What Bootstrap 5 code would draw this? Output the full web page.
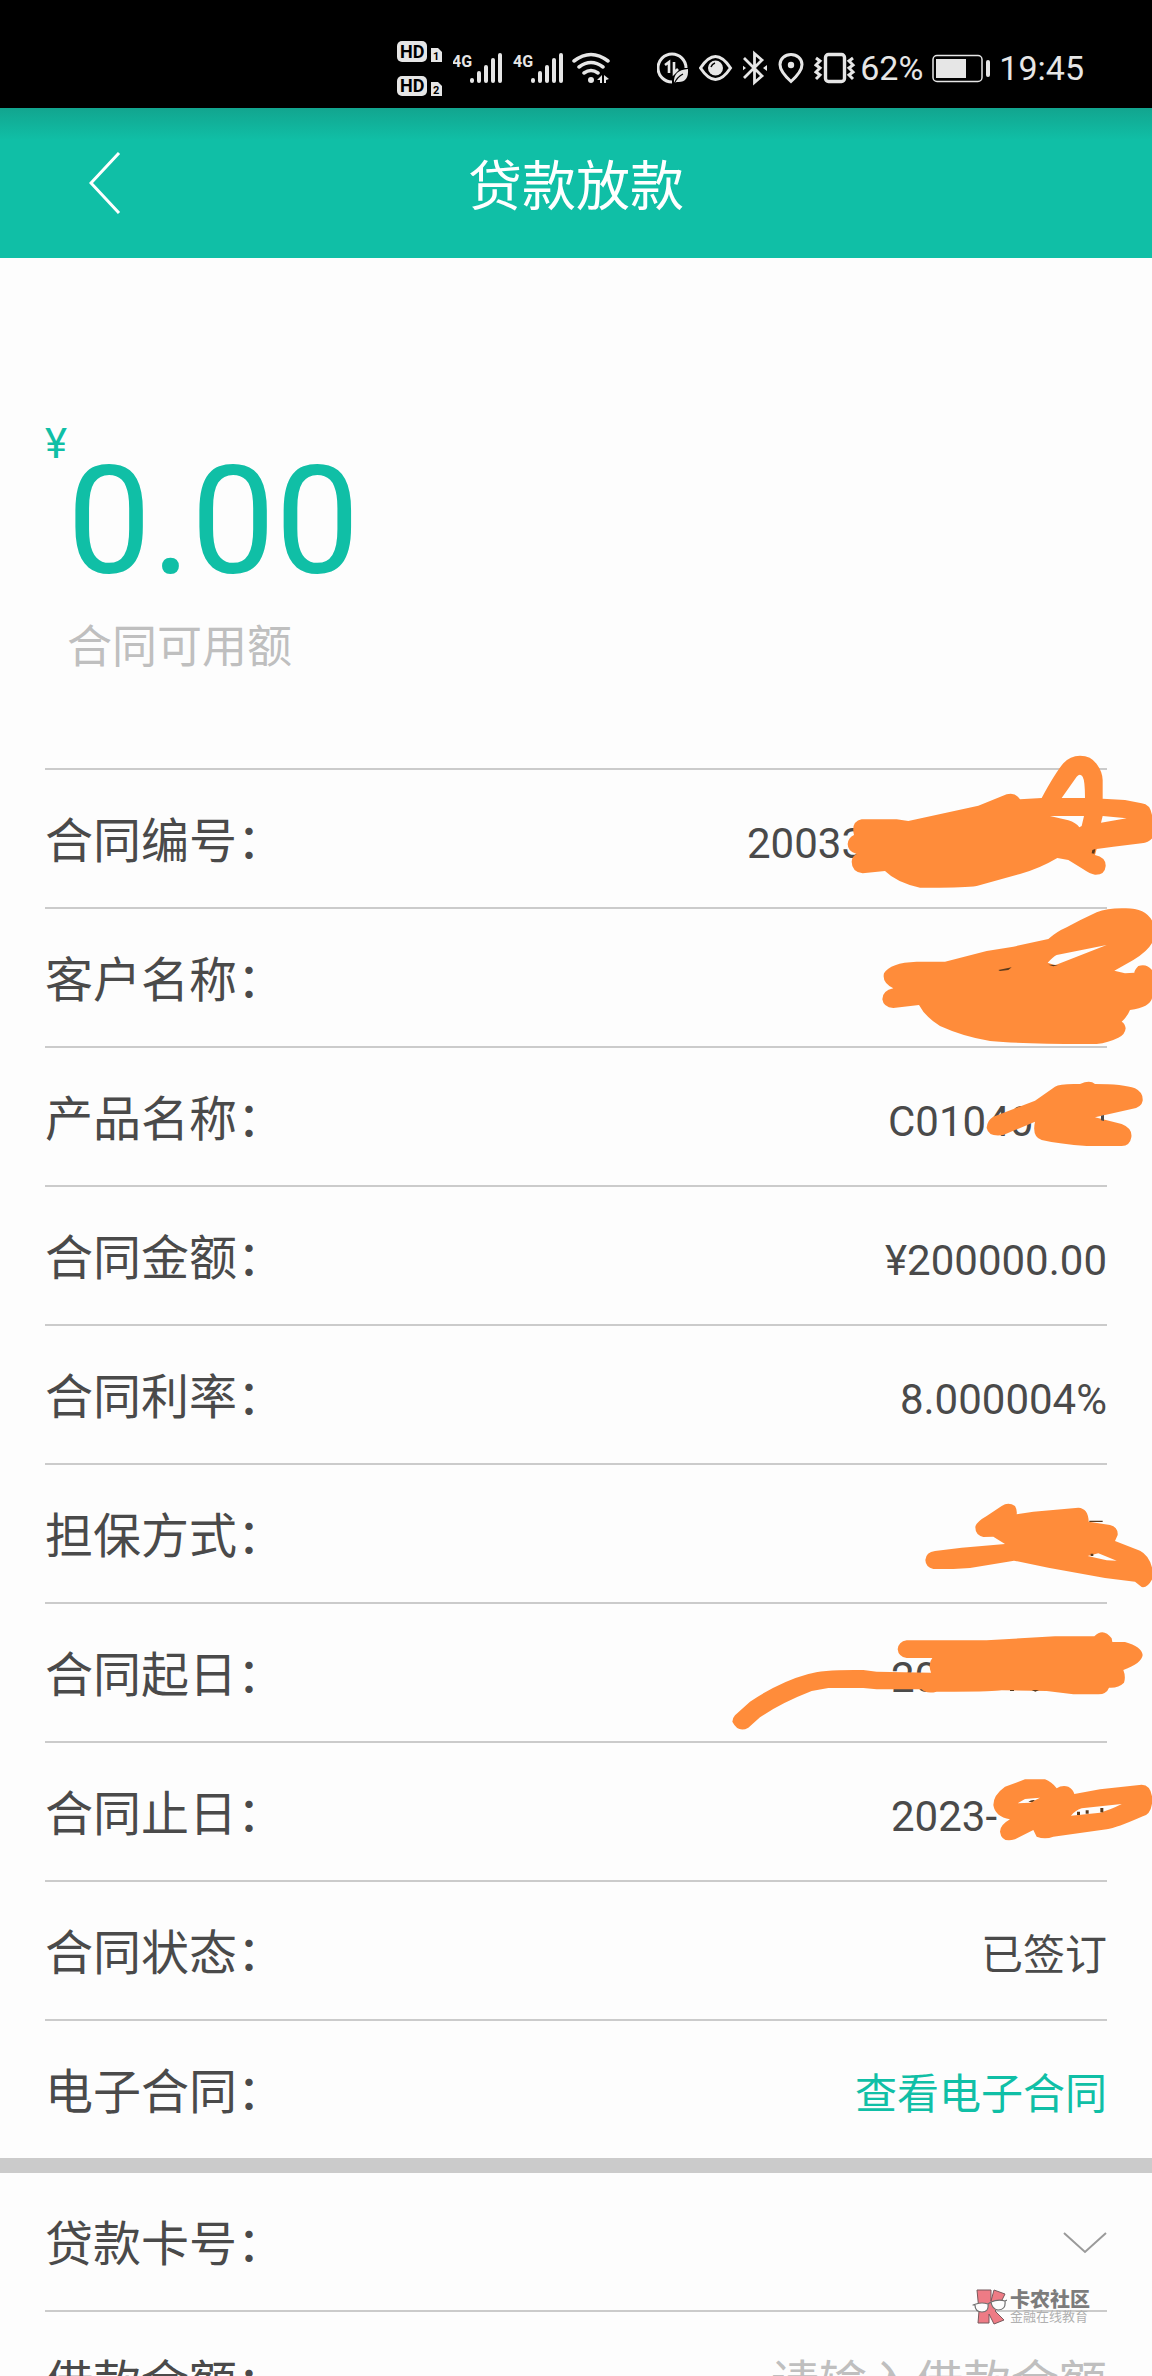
<!DOCTYPE html>
<html lang="zh-CN">
<head>
<meta charset="utf-8">
<meta name="viewport" content="width=device-width, initial-scale=1">
<title>贷款放款</title>
<link href="https://cdn.jsdelivr.net/npm/bootstrap@5.3.0/dist/css/bootstrap.min.css" rel="stylesheet">
<style>
  :root { --teal: #10bfa6; --ink: #4a4a4a; --rule: #cbcbcb; --soft: #bfbfbf; --scribble: #ff8c3a; }
  body { font-family: Roboto, "Noto Sans CJK SC", sans-serif; color: var(--ink); background: #fdfdfd; }
  .status { height: 108px; padding: 27px 68px 0 0; background: #000; color: #e6e6e6; font-size: 34px; line-height: 40px; }
  .status svg { height: 62px; flex: none; }
  .status .icons { gap: 10px; }
  .status .net { margin-right: 47px; }
  .titlebar { height: 150px; background: linear-gradient(#12a58f, var(--teal) 32px); color: #fff; }
  .titlebar h1 { font: 400 54px/80px "Noto Sans CJK SC", sans-serif; }
  .back-btn { left: 77px; padding: 0 12px; border: 0; background: none; }
  .balance { padding: 161px 45px 93px; color: var(--teal); }
  .unit { font-size: 42px; line-height: 49px; }
  .sum { font-size: 150px; line-height: 150px; margin-top: 28px; }
  .caption-text { margin: 24px 0 0 22px; font-size: 45px; line-height: 54px; color: var(--soft); }
  .lines { padding: 0 45px; }
  .line-item { padding: 31px 0 33px; border-top: 2px solid var(--rule); }
  .lines.plain .line-item:first-child { border-top: 0; }
  .line-item dt, .line-item label { font: 400 48px/73px "Noto Sans CJK SC", sans-serif; white-space: nowrap; }
  .line-item dd { margin: 0; font-size: 42px; line-height: 48px; }
  .line-item a { color: var(--teal); text-decoration: none; }
  .hid-l { width: 360px; }
  .hid-m { width: 219px; }
  .hid-s { width: 216px; }
  .scribbles { top: -28px; right: 0; width: 432px; height: 1120px; }
  .divider { height: 15px; background: var(--rule); }
  .pick { appearance: none; border: 0; background: none; height: 48px; }
  .amount { border: 0; background: none; text-align: right; padding: 0; min-width: 0; font: 400 48px/73px "Noto Sans CJK SC", sans-serif; }
  .amount::placeholder { color: var(--soft); opacity: 1; }
  .stamp { right: 17px; bottom: -15px; gap: 3px; color: #7c7c7c; font-family: "Noto Sans CJK SC", sans-serif; }
  .stamp b { font-size: 20px; line-height: 20px; font-weight: 900; }
  .stamp i { font-size: 13px; line-height: 13px; font-style: normal; color: #b0b0b0; }
</style>
<script src="https://cdn.jsdelivr.net/npm/bootstrap@5.3.0/dist/js/bootstrap.bundle.min.js"></script>
</head>
<body class="vh-100 overflow-hidden">

<div class="status d-flex align-items-center justify-content-end">
  <div class="icons net d-flex">
    <svg width="46" viewBox="400 36 46 62" fill="#e6e6e6" font-family="Roboto" font-weight="700">
      <rect x="400" y="40" width="30" height="21" rx="5"/><rect x="400" y="75" width="30" height="20" rx="5"/>
      <path d="M434 47h7l4 4v10h-11zM434 81h7l4 4v10h-11z"/>
      <g fill="#000"><text x="403" y="57" font-size="18">HD</text><text x="403" y="91" font-size="18">HD</text>
      <text x="436" y="59" font-size="11">1</text><text x="436" y="93" font-size="11">2</text></g>
    </svg>
    <svg width="51" viewBox="456 36 51 62" fill="#e6e6e6">
      <text x="455" y="66" font-size="16" font-family="Roboto" font-weight="700" fill="#e6e6e6">4G</text>
      <path d="M475 79v1M482 72v8M489 66v14M496 59v21M503 54v26" stroke="#e6e6e6" stroke-width="4" stroke-linecap="round"/>
    </svg>
    <svg width="48" viewBox="517 36 48 62" overflow="visible" fill="#e6e6e6">
      <text x="516" y="66" font-size="16" font-family="Roboto" font-weight="700">4G</text>
      <path d="M536 79v1M543 72v8M550 66v14M557 59v21M564 54v26" stroke="#e6e6e6" stroke-width="4" stroke-linecap="round"/>
    </svg>
    <svg width="38" viewBox="575 36 38 62" fill="none" stroke="#e6e6e6" stroke-width="3.5" stroke-linecap="round">
      <path d="M577 60q17-13 34 0M582 66q12-9 24 0M587 72q7-5 14 0"/>
      <circle cx="594" cy="79" r="3" fill="#e6e6e6" stroke="none"/>
      <path d="M605 74v8h-2v-3h-3zM607 74l5 4-3 1v3h-2z" fill="#e6e6e6" stroke="none"/>
    </svg>
  </div>
  <div class="icons d-flex">
    <svg width="32" viewBox="660 36 32 62" fill="none" stroke="#e6e6e6" stroke-width="3">
      <path d="M675 81a14 14 0 1 1 14-14"/><path d="M668 64l4-3v11M677 61v11l4-4" stroke-width="2.6"/>
      <path d="M677 82q-1-13 14-14q1 14-11 13z" fill="#e6e6e6" stroke="none"/><path d="M677 83q3-7 9-10" stroke="#000" stroke-width="1.2"/>
    </svg>
    <svg width="34" viewBox="702 36 34 62" fill="none" stroke="#e6e6e6" stroke-width="3">
      <path d="M703.500 67q15-23 30 0q-15 23-30 0z"/><circle cx="718.500" cy="67" r="7.500" fill="#e6e6e6" stroke="none"/><path d="M714 66q1-3 4-4" stroke="#000" stroke-width="1.500"/>
    </svg>
    <svg width="25" viewBox="746 36 25 62" fill="none" stroke="#e6e6e6" stroke-width="2.800">
      <path d="M747 57l18 18-7.500 6.500v-29l7.500 6.500-18 18"/><path d="M745 64l4 3-4 3zM770 64l-4 3 4 3z" fill="#e6e6e6" stroke="none"/>
    </svg>
    <svg width="26" viewBox="779 36 26 62" fill="none" stroke="#e6e6e6" stroke-width="3">
      <path d="M792 80.500q-11-10-11-17a11 10 0 0 1 22 0q0 7-11 17z"/><circle cx="792" cy="64" r="3.200" fill="#e6e6e6" stroke="none"/>
    </svg>
    <svg width="42" viewBox="815 36 42 62" fill="none" stroke="#e6e6e6" stroke-width="3.400">
      <rect x="826.500" y="53.500" width="19" height="27" rx="3"/><path d="M817 57l4 3-4 4 4 3-4 4 4 3-4 4M854 57l-4 3 4 4-4 3 4 4-4 3 4 4" stroke-width="3"/>
    </svg>
  </div>
  <span class="ms-1">62%</span>
  <svg class="mx-2" width="60" viewBox="932 36 60 62" fill="none" stroke="#e6e6e6">
    <rect x="934" y="54.500" width="49" height="26" rx="4" stroke-width="1.500"/><path d="M937 58h30v19h-30z" fill="#e6e6e6" stroke="none"/><path d="M989 61v13" stroke-width="4" stroke-linecap="round"/>
  </svg>
  <span>19:45</span>
</div>

<header class="titlebar position-relative d-flex align-items-center justify-content-center">
  <button class="back-btn position-absolute" type="button" aria-label="返回">
    <svg class="d-block" width="32" height="62" viewBox="0 0 32 62" fill="none" stroke="#fff" stroke-width="3"><path d="M30 1L2 31l28 30"/></svg>
  </button>
  <h1 class="m-0">贷款放款</h1>
</header>

<main>
  <section class="balance">
    <div class="d-flex align-items-start"><span class="unit">¥</span><span class="sum">0.00</span></div>
    <p class="caption-text">合同可用额</p>
  </section>

  <div class="position-relative">
    <dl class="lines m-0">
      <div class="line-item d-flex justify-content-between align-items-baseline"><dt>合同编号：</dt><dd class="hid-l">200333</dd></div>
      <div class="line-item d-flex justify-content-between align-items-baseline"><dt>客户名称：</dt><dd></dd></div>
      <div class="line-item d-flex justify-content-between align-items-baseline"><dt>产品名称：</dt><dd class="hid-m">C01040</dd></div>
      <div class="line-item d-flex justify-content-between align-items-baseline"><dt>合同金额：</dt><dd>¥200000.00</dd></div>
      <div class="line-item d-flex justify-content-between align-items-baseline"><dt>合同利率：</dt><dd>8.000004%</dd></div>
      <div class="line-item d-flex justify-content-between align-items-baseline"><dt>担保方式：</dt><dd></dd></div>
      <div class="line-item d-flex justify-content-between align-items-baseline"><dt>合同起日：</dt><dd class="hid-s">20</dd></div>
      <div class="line-item d-flex justify-content-between align-items-baseline"><dt>合同止日：</dt><dd class="hid-s">2023-</dd></div>
      <div class="line-item d-flex justify-content-between align-items-baseline"><dt>合同状态：</dt><dd>已签订</dd></div>
      <div class="line-item d-flex justify-content-between align-items-baseline"><dt>电子合同：</dt><dd><a href="#contract">查看电子合同</a></dd></div>
    </dl>
    <!-- marker strokes that hide the private values -->
    <svg class="scribbles position-absolute pe-none" viewBox="0 0 1296 3360" fill="#ff8c3a" fill-rule="evenodd" aria-hidden="true">
      <path d="M425 238L530 238L565 243L775 197L860 163Q885 155 900 178L965 174Q1005 100 1030 70Q1050 47 1080 47Q1115 47 1132 75Q1147 95 1148 120L1148 176L1215 180L1265 190Q1290 192 1296 225L1300 290Q1290 308 1265 310L1180 320L1130 327L1125 345Q1158 352 1157 378Q1155 405 1125 404Q1110 402 1090 388L1045 360L1012 354Q960 385 900 402L770 438Q730 444 600 443Q530 428 495 393L428 400Q395 395 395 365Q395 350 410 342Q383 335 383 312Q385 292 402 285Q392 245 425 238ZM1025 174L1070 110Q1080 98 1088 110Q1095 122 1095 174ZM990 228L1092 228L1085 258L1078 262Q1068 248 1045 241ZM1148 228L1220 235L1143 248Z"/>
      <path d="M675 665L590 665Q510 668 492 700Q485 728 520 745Q487 752 487 778Q490 802 520 804L597 795Q615 830 660 858Q730 890 810 903Q920 913 1130 912Q1165 908 1195 893Q1215 885 1217 865Q1215 850 1205 845Q1222 830 1230 810Q1290 802 1296 775L1296 690Q1280 670 1255 678Q1243 690 1243 698L1215 700L1183 692L1240 660Q1290 630 1300 600L1300 550Q1280 500 1205 505Q1160 505 1130 517Q1080 540 1040 562Q1010 575 985 597L880 620L800 633ZM983 668Q1000 650 1010 645L1160 615L1005 676Z"/>
      <path fill="#5b3a1c" d="M835 690L875 682L865 690L840 693ZM985 674L1014 675L1000 679ZM1117 330L1126 327L1123 341L1115 340Z"/>
      <g transform="translate(420 960)">
        <path d="M525 122L585 80Q600 70 660 72Q690 58 705 72Q790 72 825 85Q850 97 848 122Q845 142 815 147L705 172L785 192Q818 205 814 232Q810 258 785 258L680 258Q600 252 545 240Q515 230 525 185L430 225Q385 232 380 203Q382 180 400 170Z"/>
        <path fill="#4a4a4a" d="M723 167l9-2v18l-9-2z"/>
      </g>
      <g transform="translate(-60 2220)">
        <path d="M950 103L1000 95L1135 83Q1165 85 1166 125L1230 135Q1255 142 1253 165L1245 183L1320 212Q1356 230 1360 290Q1345 325 1325 321L1305 305L1215 294L1045 263L942 242L810 264L760 267L700 267Q677 262 676 240Q678 216 705 213L785 203L915 192L880 170L850 171Q825 165 826 140Q830 125 860 108L905 78Q925 65 945 78Q952 90 950 103ZM1163 228L1195 220L1250 242L1220 241Z"/>
        <path d="M620 481L860 481L1065 469L1183 469Q1210 442 1235 475L1237 486L1275 486Q1325 500 1328 525Q1325 550 1270 570Q1278 590 1272 608Q1255 625 1227 623Q1220 642 1195 643L1120 643L1040 633L905 631Q880 636 710 635Q680 643 665 628L530 628L490 624L385 624L335 633Q240 670 180 712L145 743Q115 760 97 725Q97 715 105 706L150 665Q240 605 325 582Q370 568 490 570L530 575L693 578Q683 550 697 534L620 534Q595 530 593 508Q595 485 620 481Z"/>
        <path d="M975 898L1035 898Q1055 905 1070 925Q1085 915 1105 920Q1120 928 1123 942L1200 928L1325 914Q1355 915 1357 960Q1355 1005 1325 1010Q1250 1043 1220 1048L1060 1070Q1035 1080 1010 1070L1000 1050L945 1078Q905 1090 900 1055Q900 1035 930 1018Q885 1010 880 975Q880 945 915 920ZM953 970L975 957L1020 953L990 968ZM1113 1007Q1125 992 1145 985L1265 972Q1230 990 1200 998Z"/>
        <path fill="#5b3a1c" d="M1168 122h40v4h-40zM1172 221h8v7h-8zM1131 995h9v10h-9zM1157 991h9v10h-9zM1201 984h9v13h-9zM985 966q10-8 20-5l-8 5zM930 630h12v3h-12zM995 630h22l-11 5z"/>
      </g>
    </svg>
  </div>

  <div class="divider"></div>

  <form class="lines plain">
    <div class="line-item position-relative d-flex align-items-center">
      <label for="card">贷款卡号：</label>
      <select id="card" class="pick flex-grow-1"><option value=""></option></select>
      <svg class="pe-none mt-1" width="44" height="22" viewBox="0 0 44 22" fill="none" stroke="#9a9a9a" stroke-width="2"><path d="M1 1l21 19L43 1"/></svg>
      <div class="stamp position-absolute d-flex pe-none">
        <svg width="35" height="36" viewBox="0 0 35 36" stroke="#77595c" stroke-width="1" stroke-linejoin="round">
          <path fill="#ee7b85" d="M5 1h14v11L22 1l11 4-7 14-3 3 9 9-10 4-5-10v9H6l1-12z"/>
          <path fill="#fdfdfd" stroke="#6f6f6f" stroke-width="1.200" d="M1 16l3-1q6-2 12 0q1 8-6 8q-7 0-7-7zM19 13q7-3 14-1q1 9-7 9q-6-1-7-8zM16 15l3-2M33 12l2-1"/>
        </svg>
        <div class="d-flex flex-column"><b>卡农社区</b><i>金融在线教育</i></div>
      </div>
    </div>
    <div class="line-item d-flex align-items-center">
      <label for="amount">借款金额：</label>
      <input id="amount" class="amount flex-grow-1" type="text" inputmode="decimal" placeholder="请输入借款金额">
    </div>
  </form>
</main>
</body>
</html>
